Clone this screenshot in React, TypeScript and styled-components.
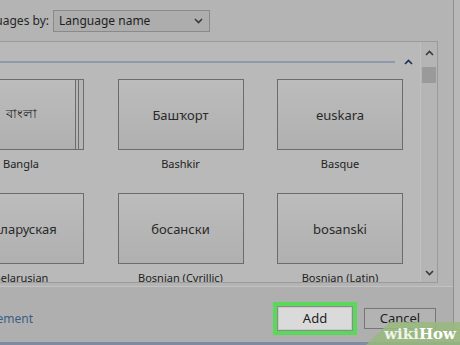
import styled, { createGlobalStyle } from "styled-components";

const GlobalStyle = createGlobalStyle`
  html, body {
    margin: 0;
    padding: 0;
  }
  body {
    background: #b8b8b8;
    font-family: "Noto Sans", "Open Sans", sans-serif;
    color: #262626;
  }
`;

type Language = { native: string; name: string; stacked?: boolean };

const languages: Language[] = [
  { native: "বাংলা", name: "Bangla", stacked: true },
  { native: "Башҡорт", name: "Bashkir" },
  { native: "euskara", name: "Basque" },
  { native: "беларуская", name: "Belarusian" },
  { native: "босански", name: "Bosnian (Cyrillic)" },
  { native: "bosanski", name: "Bosnian (Latin)" },
];

const Chevron = ({ up, color }: { up?: boolean; color: string }) => (
  <svg width="9" height="6" viewBox="0 0 9 6">
    <path
      d={up ? "M1 5 L4.5 1.5 L8 5" : "M1 1 L4.5 4.5 L8 1"}
      fill="none"
      stroke={color}
      strokeWidth="1.6"
    />
  </svg>
);

export default function App() {
  return (
    <>
      <GlobalStyle />
      <Screen>
        <Dialog>
          <TopBar>
            <Clip $width={49}>
              <span>Group languages by:</span>
            </Clip>
            <Select>
              <span>Language name</span>
              <Chevron color="#3a3a3a" />
            </Select>
          </TopBar>

          <Panel>
            <Content>
              <GroupHeader>
                <GroupLine />
                <Chevron up color="#1f2f5a" />
              </GroupHeader>
              <TileGrid>
                {languages.map((l) => (
                  <Cell key={l.name}>
                    <Tile $stacked={l.stacked}>{l.native}</Tile>
                    <TileLabel>{l.name}</TileLabel>
                  </Cell>
                ))}
              </TileGrid>
            </Content>
            <Scrollbar>
              <Chevron up color="#3a3a3a" />
              <Thumb />
              <ScrollSpacer />
              <Chevron color="#3a3a3a" />
            </Scrollbar>
          </Panel>

          <Footer>
            <Clip $width={33}>
              <Link>Privacy statement</Link>
            </Clip>
            <Spacer />
            <Highlight>
              <Button $primary>Add</Button>
            </Highlight>
            <Button>Cancel</Button>
          </Footer>
        </Dialog>
        <BottomStrip />

        <Watermark>
          <span>wiki</span>
          <strong>How</strong>
        </Watermark>
      </Screen>
    </>
  );
}

const Screen = styled.div`
  position: relative;
  width: 460px;
  height: 345px;
  overflow: hidden;
  display: flex;
  flex-direction: column;
`;

const Dialog = styled.div`
  width: 453px;
  flex: 1;
  display: flex;
  flex-direction: column;
  background: #b4b4b4;
  border-right: 1px solid #8f8f8f;
`;

const TopBar = styled.div`
  height: 41px;
  display: flex;
  align-items: center;
  gap: 4px;
  font-size: 12px;
`;

const Clip = styled.div<{ $width: number }>`
  width: ${(p) => p.$width}px;
  overflow: hidden;
  display: flex;
  justify-content: flex-end;
  white-space: nowrap;
  flex-shrink: 0;
`;

const Select = styled.div`
  width: 157px;
  height: 22px;
  box-sizing: border-box;
  border: 1px solid #8a8a8a;
  background: #adadad;
  display: flex;
  align-items: center;
  justify-content: space-between;
  padding: 0 6px 0 5px;
  font-size: 12px;
  color: #1e1e1e;
`;

const Panel = styled.div`
  width: 438px;
  height: 242px;
  box-sizing: border-box;
  border: 1px solid #9a9a9a;
  border-left: none;
  background: #b9b9b9;
  display: flex;
`;

const Content = styled.div`
  flex: 1;
  overflow: hidden;
  display: flex;
  flex-direction: column;
`;

const GroupHeader = styled.div`
  margin-top: 17px;
  height: 6px;
  display: flex;
  align-items: center;
  padding-right: 7px;

  svg {
    margin-left: 9px;
  }
`;

const GroupLine = styled.div`
  flex: 1;
  height: 2px;
  background: #8e9bab;
`;

const TileGrid = styled.div`
  margin-top: 14px;
  margin-left: -42px;
  display: grid;
  grid-template-columns: repeat(3, 126px);
  column-gap: 33.5px;
  row-gap: 22px;
`;

const Cell = styled.div`
  display: flex;
  flex-direction: column;
  align-items: center;
`;

const Tile = styled.div<{ $stacked?: boolean }>`
  width: 126px;
  height: 71px;
  box-sizing: border-box;
  border: 1px solid #6c6c6c;
  background: linear-gradient(#bcbcbc, #b0b0b0);
  display: flex;
  align-items: center;
  justify-content: center;
  font-size: 13px;
  color: #2a2a2a;
  box-shadow: ${(p) =>
    p.$stacked
      ? "inset -4px 0 0 #b6b6b6, inset -5px 0 0 #6c6c6c, inset -7px 0 0 #b6b6b6, inset -8px 0 0 #6c6c6c"
      : "none"};
`;

const TileLabel = styled.div`
  margin-top: 7px;
  font-size: 11px;
  line-height: 14px;
  color: #222;
`;

const Scrollbar = styled.div`
  width: 17px;
  box-sizing: border-box;
  border-left: 1px solid #c0c0c0;
  background: #b5b5b5;
  display: flex;
  flex-direction: column;
  align-items: center;
  padding: 8px 0 6px;
`;

const Thumb = styled.div`
  margin-top: 11px;
  width: 14px;
  height: 16px;
  background: #9a9a9a;
`;

const ScrollSpacer = styled.div`
  flex: 1;
`;

const Footer = styled.div`
  margin-top: 3px;
  border-top: 1px solid #c2c2c2;
  flex: 1;
  display: flex;
  align-items: center;
  padding: 7px 17px 0 0;
  background: #afafaf;
`;

const Link = styled.span`
  font-size: 12px;
  color: #3b5e88;
`;

const Spacer = styled.div`
  flex: 1;
`;

const Highlight = styled.div`
  border: 4px solid #5ad85a;
  margin-right: 7px;
  display: flex;
`;

const Button = styled.div<{ $primary?: boolean }>`
  width: ${(p) => (p.$primary ? 76 : 72)}px;
  height: ${(p) => (p.$primary ? 25 : 21)}px;
  box-sizing: border-box;
  border: 1px solid ${(p) => (p.$primary ? "#8c8c8c" : "#777")};
  background: ${(p) => (p.$primary ? "#dadada" : "#b3b3b3")};
  box-shadow: ${(p) => (p.$primary ? "inset 0 0 0 1px #c8c8c8" : "none")};
  display: flex;
  align-items: center;
  justify-content: center;
  font-size: 13px;
  color: #1e1e1e;
`;

const BottomStrip = styled.div`
  height: 3px;
  background: #7d8ca0;
`;

const Watermark = styled.div`
  position: absolute;
  right: 0;
  bottom: 0;
  width: 94px;
  height: 23px;
  background: rgba(150, 185, 125, 0.85);
  clip-path: polygon(0 100%, 24px 0, 100% 0, 100% 100%);
  display: flex;
  align-items: center;
  justify-content: flex-end;
  padding-right: 4px;
  box-sizing: border-box;
  font-family: "DejaVu Serif", "Liberation Serif", serif;
  font-size: 15px;
  font-weight: bold;
  color: #eef3e8;

  strong {
    color: #ffffff;
  }
`;
